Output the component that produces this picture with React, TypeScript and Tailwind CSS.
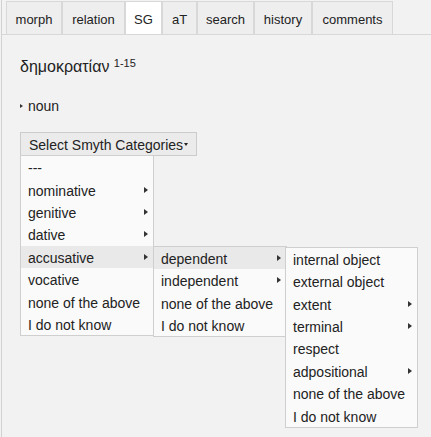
import React from "react";

const tabs = [
  { label: "morph", w: "w-[56px]" },
  { label: "relation", w: "w-[63px]" },
  { label: "SG", w: "w-[37px]", active: true },
  { label: "aT", w: "w-[35px]" },
  { label: "search", w: "w-[57px]" },
  { label: "history", w: "w-[58px]" },
  { label: "comments", w: "w-[81px]" },
];

interface Item {
  label: string;
  sub?: boolean;
  active?: boolean;
  children?: React.ReactNode;
}

function Arrow() {
  return (
    <span className="w-0 h-0 border-y-[3px] border-y-transparent border-l-[4px] border-l-[#333] shrink-0" />
  );
}

function Menu({ items, width }: { items: Item[]; width: string }) {
  return (
    <div className={`${width} bg-[#fafafa] border border-[#cfcfcf]`}>
      {items.map((it) => (
        <div
          key={it.label}
          className={`relative h-[22.4px] flex items-center justify-between pl-[7px] pr-[5px] ${
            it.active ? "bg-[#e9e9e9]" : ""
          }`}
        >
          <span className="whitespace-nowrap pt-[3px]">{it.label}</span>
          {it.sub && <Arrow />}
          {it.children}
        </div>
      ))}
    </div>
  );
}

export default function App() {
  const third: Item[] = [
    { label: "internal object" },
    { label: "external object" },
    { label: "extent", sub: true },
    { label: "terminal", sub: true },
    { label: "respect" },
    { label: "adpositional", sub: true },
    { label: "none of the above" },
    { label: "I do not know" },
  ];

  const second: Item[] = [
    {
      label: "dependent",
      sub: true,
      active: true,
      children: (
        <div className="absolute left-[calc(100%-1px)] top-0 z-20">
          <Menu items={third} width="w-[133px]" />
        </div>
      ),
    },
    { label: "independent", sub: true },
    { label: "none of the above" },
    { label: "I do not know" },
  ];

  const first: Item[] = [
    { label: "---" },
    { label: "nominative", sub: true },
    { label: "genitive", sub: true },
    { label: "dative", sub: true },
    {
      label: "accusative",
      sub: true,
      active: true,
      children: (
        <div className="absolute left-full top-0 z-10">
          <Menu items={second} width="w-[134px]" />
        </div>
      ),
    },
    { label: "vocative" },
    { label: "none of the above" },
    { label: "I do not know" },
  ];

  return (
    <div
      className="h-[437px] w-[431px] bg-[#f2f2f2] text-[#222] overflow-hidden"
      style={{ fontFamily: '"Liberation Sans", Arial, sans-serif' }}
    >
      <div className="ml-[1px] h-full border-l border-[#d2d2d2]">
        {/* Tabs */}
        <div className="flex pl-[4px] pt-[1px] border-b border-[#d8d8d8]">
          {tabs.map((t) => (
            <div
              key={t.label}
              className={`${t.w} h-[33px] flex items-center justify-center pt-[3px] text-[13px] border-t border-x border-[#d8d8d8] ${
                t.active ? "bg-white" : "bg-[#eeeeee]"
              }`}
            >
              {t.label}
            </div>
          ))}
        </div>

        {/* Content */}
        <div className="pl-[18px]">
          <div className="mt-[23px] text-[16px] leading-[18px]">
            δημοκρατίαν <sup className="text-[11px]">1-15</sup>
          </div>

          <div className="mt-[22px] flex items-center gap-[5px] text-[14px] leading-[16px]">
            <span className="w-0 h-0 border-y-[2.5px] border-y-transparent border-l-[3px] border-l-[#333]" />
            <span>noun</span>
          </div>

          <div className="mt-[18px] text-[14px]">
            <div className="w-[177px] h-[24px] flex items-center pl-[8px] bg-[#ebebeb] border border-[#cccccc]">
              <span className="whitespace-nowrap pt-[2px]">Select Smyth Categories</span>
              <span className="ml-[1px] w-0 h-0 border-x-[2.5px] border-x-transparent border-t-[3px] border-t-[#222]" />
            </div>
            <div className="-mt-[1px] relative">
              <Menu items={first} width="w-[134px]" />
            </div>
          </div>
        </div>
      </div>
    </div>
  );
}
